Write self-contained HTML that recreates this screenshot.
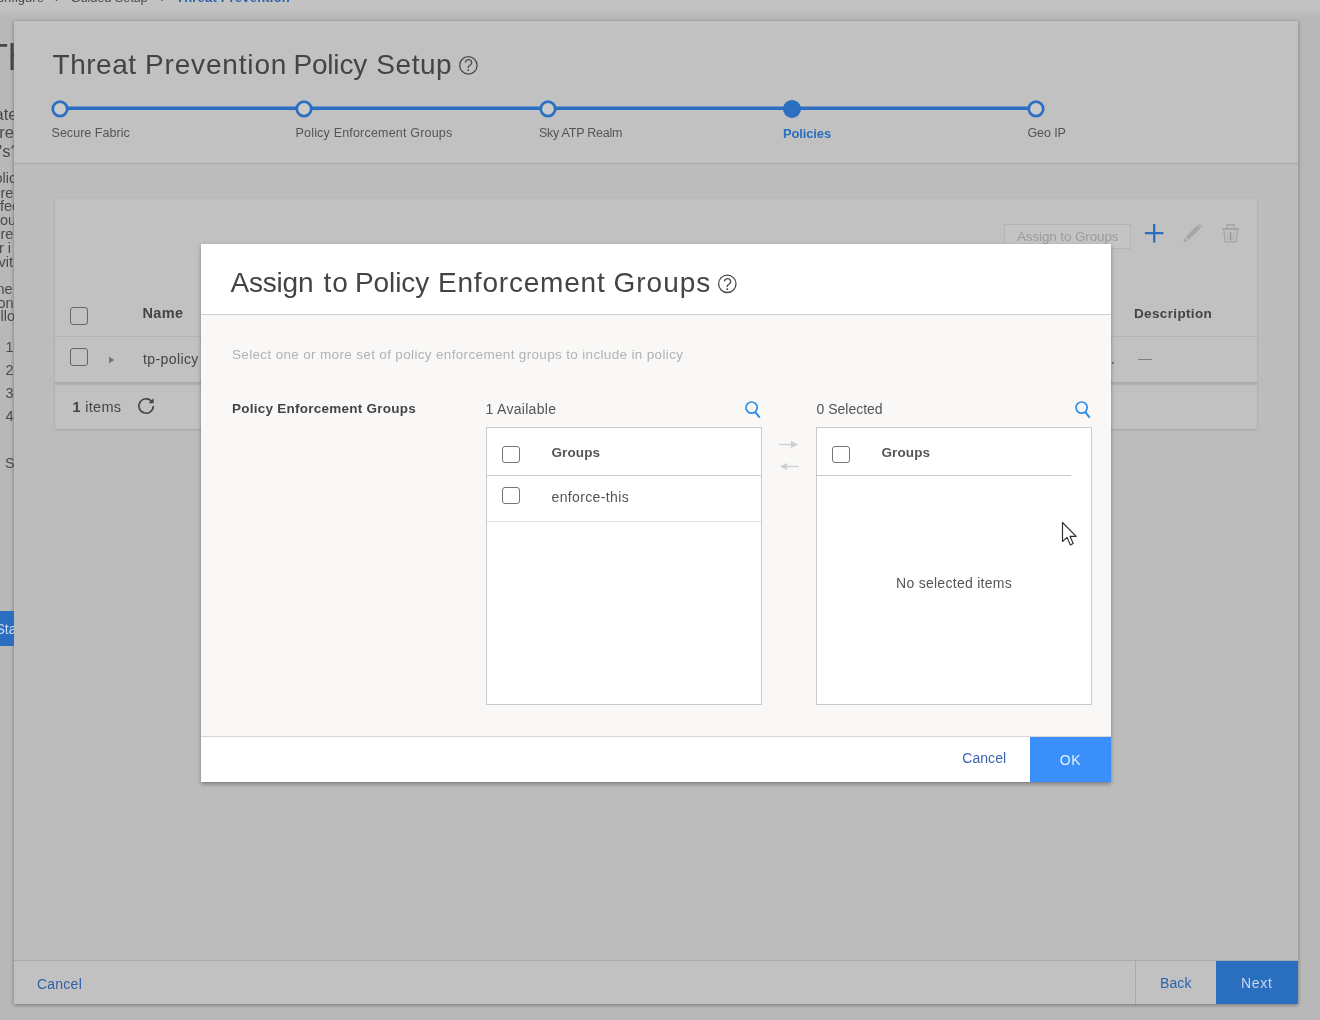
<!DOCTYPE html>
<html lang="en">
<head>
<meta charset="utf-8">
<title>Threat Prevention Policy Setup</title>
<style>
*{box-sizing:border-box;margin:0;padding:0}
html,body{width:1320px;height:1020px;overflow:hidden}
body{position:relative;background:#b8b8b8;font-family:"Liberation Sans",sans-serif;color:#3a3a3a;font-size:13px}
.abs{position:absolute}
.t{position:absolute;white-space:nowrap;line-height:1;transform:translateY(-50%)}
.tt{position:absolute;white-space:nowrap;line-height:1}
.b{font-weight:bold}
/* background page fragments */
#topstrip{left:0;top:0;width:1320px;height:21px;background:linear-gradient(#c3c3c3 0,#c2c2c2 9px,#b9b9b9 15px,#b6b6b6 21px)}
.frag{color:#4a4a4a}
/* wizard panel */
#wiz{left:14px;top:21px;width:1284px;height:983px;background:#c1c1c1;box-shadow:0 1px 4px rgba(0,0,0,.38)}
#wizbody{left:14px;top:163px;width:1284px;height:798px;background:#bdbcbc;border-top:1.5px solid #a8a8a8}
#wizfoot{left:14px;top:960px;width:1284px;height:44px;background:#c1c1c1;border-top:1px solid #a9a9a9}
#card{left:55px;top:199px;width:1202px;height:230px;background:#c1c1c1;box-shadow:0 1px 2.5px rgba(0,0,0,.14)}
.cb{position:absolute;width:18px;height:17.5px;border:1.5px solid #666;border-radius:3px;background:transparent}
/* modal */
#modal{left:201px;top:244px;width:910px;height:537.5px;background:#f9f8f7;box-shadow:0 1.5px 4px rgba(0,0,0,.34)}
#mhead{left:0;top:0;width:910px;height:71px;background:#fff;border-bottom:1px solid #cfcfcf}
#mfoot{left:0;top:492px;width:910px;height:45.5px;background:#fff;border-top:1px solid #d6d6d6}
.list{position:absolute;width:276px;height:278px;background:#fff;border:1px solid #cbcbcb}
.mcb{position:absolute;width:17.5px;height:17px;border:1.5px solid #757575;border-radius:3px;background:#fff}
</style>
</head>
<body>
<div id="root" style="position:absolute;left:0;top:0;width:1320px;height:1020px;overflow:hidden;will-change:transform">
<div id="topstrip" class="abs"></div>

<!-- underlying page fragments on the far left -->
<div class="tt frag" id="bc1" style="left:-12.5px;top:-9px;font-size:13px">Configure</div>
<div class="tt frag" id="bc2" style="left:55px;top:-9px;font-size:13px">›</div>
<div class="tt frag" id="bc3" style="left:70.5px;top:-9px;font-size:13px;letter-spacing:-.2px">Guided Setup</div>
<div class="tt frag" id="bc4" style="left:160.5px;top:-9px;font-size:13px">›</div>
<div class="tt b" id="bc5" style="left:176px;top:-9px;font-size:13px;color:#2a62a8;letter-spacing:.2px">Threat Prevention</div>

<!-- wizard -->
<div id="wiz" class="abs"></div>
<div id="wizbody" class="abs"></div>
<div id="wizfoot" class="abs"></div>

<div class="tt" id="wt1" style="left:52.50px;top:51.10px;font-size:28px;color:#444;letter-spacing:0.540px">Threat</div>
<div class="tt" id="wt2" style="left:145.00px;top:51.10px;font-size:28px;color:#444;letter-spacing:0.833px">Prevention</div>
<div class="tt" id="wt3" style="left:293.50px;top:51.10px;font-size:28px;color:#444;letter-spacing:-0.200px">Policy</div>
<div class="tt" id="wt4" style="left:376.30px;top:51.10px;font-size:28px;color:#444;letter-spacing:0.550px">Setup</div>
<svg class="abs" style="left:457px;top:54px" width="24" height="24" viewBox="457 54 24 24"><circle cx="468.4" cy="65.4" r="8.7" fill="none" stroke="#4a4a4a" stroke-width="1.3"/><text x="468.5" y="71.2" font-family="Liberation Sans, sans-serif" font-size="16" text-anchor="middle" fill="#505050">?</text></svg>

<!-- stepper -->
<svg class="abs" style="left:40px;top:94px" width="1020" height="30" viewBox="40 94 1020 30">
  <line x1="60" y1="108.3" x2="1036" y2="108.3" stroke="#2a6fc2" stroke-width="3.6"/>
  <circle cx="60" cy="108.9" r="7.2" fill="#cbcbcb" stroke="#2a6fc2" stroke-width="2.7"/>
  <circle cx="304" cy="108.9" r="7.2" fill="#cbcbcb" stroke="#2a6fc2" stroke-width="2.7"/>
  <circle cx="548" cy="108.9" r="7.2" fill="#cbcbcb" stroke="#2a6fc2" stroke-width="2.7"/>
  <circle cx="792" cy="108.9" r="9" fill="#2a6fc2"/>
  <circle cx="1036" cy="108.9" r="7.2" fill="#cbcbcb" stroke="#2a6fc2" stroke-width="2.7"/>
</svg>
<div class="tt" id="s1" style="left:51.50px;top:127.32px;font-size:12.5px;color:#555;letter-spacing:0.042px">Secure Fabric</div>
<div class="tt" id="s2" style="left:295.50px;top:127.32px;font-size:12.5px;color:#555;letter-spacing:0.188px">Policy Enforcement Groups</div>
<div class="tt" id="s3" style="left:539.00px;top:127.32px;font-size:12.5px;color:#555;letter-spacing:-0.250px">Sky ATP Realm</div>
<div class="tt b" id="s4" style="left:783.00px;top:126.90px;font-size:13px;color:#2a6fc2;letter-spacing:-0.143px">Policies</div>
<div class="tt" id="s5" style="left:1027.50px;top:127.32px;font-size:12.5px;color:#555;letter-spacing:-0.100px">Geo IP</div>

<!-- grid card -->
<div id="card" class="abs"></div>
<div class="abs" style="left:55px;top:336px;width:1202px;height:1px;background:#b3b3b3"></div>
<div class="abs" style="left:55px;top:382px;width:1202px;height:1.5px;background:#adadad;box-shadow:0 1px 1.5px rgba(0,0,0,.10)"></div>
<div class="abs" style="left:1004px;top:224px;width:127px;height:25px;border:1px solid #b4b4b4;background:#c4c4c4"></div>
<div class="tt" id="atg" style="left:1017.00px;top:230.07px;font-size:13.5px;color:#9b9b9b;letter-spacing:-0.133px">Assign to Groups</div>
<svg class="abs" style="left:1140px;top:220px" width="104" height="28" viewBox="1140 220 104 28">
  <path d="M1154.2 223.9v18.6M1144.9 233.2h18.6" stroke="#2c6fbf" stroke-width="2.3" fill="none"/>
  <g fill="#a7a7a7">
    <path d="M1183.2 242.6l1.6-4.6 3 3z"/>
    <path d="M1185.6 237l11.9-11.9 3.1 3.1-11.9 11.9z"/>
    <path d="M1198.3 224.3l.9-.9 3.1 3.1-.9.9z"/>
  </g>
  <g fill="none" stroke="#a5a5a5">
    <path d="M1227.2 228v-3.3h6.8v3.3" stroke-width="1.4"/>
    <path d="M1222.2 229h16.8" stroke-width="2"/>
    <path d="M1223.9 230.5l1.2 11.4h11l1.2-11.4" stroke-width="1.3"/>
    <path d="M1227.6 232.5l.3 7.8M1233.6 232.5l-.3 7.8" stroke-width="1" stroke="#b0b0b0"/>
    <path d="M1230.6 232.2v8.2" stroke-width="1.6" stroke="#9a9a9a"/>
  </g>
</svg>

<div class="cb" style="left:70px;top:307px"></div>
<div class="cb" style="left:70px;top:348px"></div>
<div class="tt b" id="gname" style="left:142.50px;top:306.03px;font-size:14.5px;color:#444;letter-spacing:0.367px">Name</div>
<div class="tt b" id="gdesc" style="left:1134.00px;top:306.87px;font-size:13.5px;color:#444;letter-spacing:0.350px">Description</div>
<svg class="abs" style="left:107px;top:355.4px" width="10" height="10" viewBox="0 0 10 10"><path d="M2 1.8l5.4 3.2-5.4 3.2z" fill="#777"/></svg>
<div class="tt" id="tpp" style="left:143.00px;top:351.65px;font-size:14px;color:#444;letter-spacing:0.400px">tp-policy</div>
<div class="abs" style="left:1138px;top:358.7px;width:13.5px;height:1.5px;background:#808080"></div>
<div class="abs" style="left:1111.5px;top:362px;width:2px;height:2px;background:#777"></div>
<div class="tt" id="items" style="left:72.50px;top:400.13px;font-size:14.5px;color:#444;letter-spacing:0.300px"><span class="b">1</span> items</div>
<svg class="abs" style="left:135px;top:395px" width="22" height="22" viewBox="0 0 22 22"><path d="M17.2 7.2A7.2 7.2 0 1 0 18.3 11" stroke="#444" stroke-width="1.6" fill="none"/><path d="M18.6 3.2v5h-5z" fill="#444"/></svg>

<!-- wizard footer -->
<div class="tt" id="wcancel" style="left:36.90px;top:977.15px;font-size:14px;color:#2f5fa8;letter-spacing:0.260px">Cancel</div>
<div class="abs" style="left:1135px;top:961px;width:1px;height:43px;background:#a9a9a9"></div>
<div class="tt" id="wback" style="left:1160.00px;top:976.35px;font-size:14px;color:#2a66ae;letter-spacing:0.100px">Back</div>
<div class="abs" style="left:1216px;top:961px;width:82px;height:43px;background:#2a6ec0"></div>
<div class="tt" id="wnext" style="left:1241.00px;top:976.35px;font-size:14px;color:#c8d6ea;letter-spacing:0.667px">Next</div>

<!-- left strip fragments of the underlying page (clipped by wizard edge) -->
<div class="abs" id="leftstrip" style="left:0;top:0;width:14px;height:1020px;overflow:hidden">
  <div class="t frag" id="bigT" style="left:-14px;top:58px;font-size:36px;color:#454545">Th</div>
  <div class="tt frag" style="left:-5.4px;top:105.73px;font-size:16.5px">ate</div>
  <div class="tt frag" style="left:-0.8px;top:124.23px;font-size:16.5px">re</div>
  <div class="tt frag" style="left:-11.9px;top:142.73px;font-size:16.5px">P's?</div>
  <div class="tt frag" style="left:-5.5px;top:171.43px;font-size:14.5px">olic</div>
  <div class="tt frag" style="left:0.5px;top:185.53px;font-size:14.5px">re</div>
  <div class="tt frag" style="left:0px;top:199.43px;font-size:14.5px">fec</div>
  <div class="tt frag" style="left:0px;top:213.03px;font-size:14.5px">ou</div>
  <div class="tt frag" style="left:0.5px;top:226.93px;font-size:14.5px">re</div>
  <div class="tt frag" style="left:-1px;top:240.73px;font-size:14.5px">r i</div>
  <div class="tt frag" style="left:-1.5px;top:254.73px;font-size:14.5px">vit</div>
  <div class="tt frag" style="left:-3.5px;top:281.93px;font-size:14.5px">ne</div>
  <div class="tt frag" style="left:-2.5px;top:295.73px;font-size:14.5px">on</div>
  <div class="tt frag" style="left:0.5px;top:309.43px;font-size:14.5px">llo</div>
  <div class="tt frag" style="left:5.5px;top:339.73px;font-size:14.5px">1</div>
  <div class="tt frag" style="left:5.5px;top:363.03px;font-size:14.5px">2</div>
  <div class="tt frag" style="left:5.5px;top:386.03px;font-size:14.5px">3</div>
  <div class="tt frag" style="left:5.5px;top:409.03px;font-size:14.5px">4</div>
  <div class="tt frag" style="left:5px;top:456.03px;font-size:14.5px">S</div>
  <div class="abs" style="left:0;top:611px;width:14px;height:35px;background:#2a6ec0"></div>
  <div class="t" style="left:-4.5px;top:628.8px;font-size:14px;color:#c9dcf3">Sta</div>
</div>

<!-- modal -->
<div id="modal" class="abs">
  <div id="mhead" class="abs"></div>
  <div class="tt" id="mt1" style="left:29.50px;top:25.00px;font-size:28px;color:#444;letter-spacing:-0.200px">Assign</div>
  <div class="tt" id="mt2" style="left:122.40px;top:25.00px;font-size:28px;color:#444;letter-spacing:1.200px">to</div>
  <div class="tt" id="mt3" style="left:154.00px;top:25.00px;font-size:28px;color:#444;letter-spacing:-0.100px">Policy</div>
  <div class="tt" id="mt4" style="left:237.00px;top:25.00px;font-size:28px;color:#444;letter-spacing:0.800px">Enforcement</div>
  <div class="tt" id="mt5" style="left:412.50px;top:25.00px;font-size:28px;color:#444;letter-spacing:1.000px">Groups</div>
  <svg class="abs" style="left:514px;top:27px" width="24" height="24" viewBox="514 27 24 24"><circle cx="526.3" cy="39.8" r="8.7" fill="none" stroke="#4a4a4a" stroke-width="1.3"/><text x="526.4" y="45.6" font-family="Liberation Sans, sans-serif" font-size="16" text-anchor="middle" fill="#505050">?</text></svg>

  <div class="tt" id="msub" style="left:31.00px;top:104.07px;font-size:13.5px;color:#b2b2b2;letter-spacing:0.338px">Select one or more set of policy enforcement groups to include in policy</div>
  <div class="tt b" id="mlabel" style="left:31.00px;top:158.27px;font-size:13.5px;color:#444;letter-spacing:0.250px">Policy Enforcement Groups</div>
  <div class="tt" id="mavail" style="left:284.50px;top:157.85px;font-size:14px;color:#555;letter-spacing:0.300px">1 Available</div>
  <div class="tt" id="msel" style="left:615.50px;top:157.85px;font-size:14px;color:#555;letter-spacing:0.000px">0 Selected</div>

  <svg class="abs" style="left:541px;top:154px" width="20" height="22" viewBox="0 0 20 22"><circle cx="9.6" cy="9.6" r="5.6" fill="none" stroke="#2f8de6" stroke-width="1.7"/><path d="M13.4 14.2l4.3 5.4" stroke="#2f8de6" stroke-width="2" fill="none"/></svg>
  <svg class="abs" style="left:871px;top:154px" width="20" height="22" viewBox="0 0 20 22"><circle cx="9.6" cy="9.6" r="5.6" fill="none" stroke="#2f8de6" stroke-width="1.7"/><path d="M13.4 14.2l4.3 5.4" stroke="#2f8de6" stroke-width="2" fill="none"/></svg>

  <div class="list" style="left:285px;top:183px">
    <div class="abs" style="left:0;top:47px;width:274px;height:1px;background:#c9c9c9"></div>
    <div class="abs" style="left:0;top:92.5px;width:274px;height:1px;background:#e4e4e4"></div>
  </div>
  <div class="mcb" style="left:301px;top:202px"></div>
  <div class="mcb" style="left:301px;top:243px"></div>
  <div class="tt b" id="g1" style="left:350.50px;top:201.57px;font-size:13.5px;color:#555;letter-spacing:0.100px">Groups</div>
  <div class="tt" id="enf" style="left:350.50px;top:246.15px;font-size:14px;color:#555;letter-spacing:0.364px">enforce-this</div>

  <svg class="abs" style="left:575px;top:192px" width="26" height="36" viewBox="0 0 26 36"><path d="M3 8.5h13" stroke="#cfcfcf" stroke-width="1.4"/><path d="M15 5l7 3.5-7 3.5z" fill="#cfcfcf"/><path d="M23 30.5H10" stroke="#cfcfcf" stroke-width="1.4"/><path d="M11 27l-7 3.5 7 3.5z" fill="#cfcfcf"/></svg>

  <div class="list" style="left:615px;top:183px">
    <div class="abs" style="left:0;top:47px;width:254px;height:1px;background:#c9c9c9"></div>
  </div>
  <div class="mcb" style="left:631px;top:202px"></div>
  <div class="tt b" id="g2" style="left:680.50px;top:201.57px;font-size:13.5px;color:#555;letter-spacing:0.100px">Groups</div>
  <div class="tt" id="nosel" style="left:695.00px;top:332.15px;font-size:14px;color:#555;letter-spacing:0.281px">No selected items</div>

  <!-- mouse cursor -->
  <svg class="abs" style="left:859px;top:276px" width="20" height="28" viewBox="0 0 20 28"><path d="M2.5 2.5v19l4.6-4.2 3.2 7.6 2.9-1.3-3.2-7.3h6.2z" fill="#fff" stroke="#2e2e2e" stroke-width="1.15" stroke-linejoin="round"/></svg>

  <div id="mfoot" class="abs"></div>
  <div class="tt" id="mcancel" style="left:761.30px;top:506.85px;font-size:14px;color:#3a63ad;letter-spacing:0.040px">Cancel</div>
  <div class="abs" style="left:828.5px;top:493px;width:81.5px;height:44.5px;background:#3b8ffa"></div>
  <div class="tt" id="mok" style="left:858.70px;top:509.15px;font-size:14px;color:#e2f1ff;letter-spacing:0.700px">OK</div>
</div>
</div>
</body>
</html>
